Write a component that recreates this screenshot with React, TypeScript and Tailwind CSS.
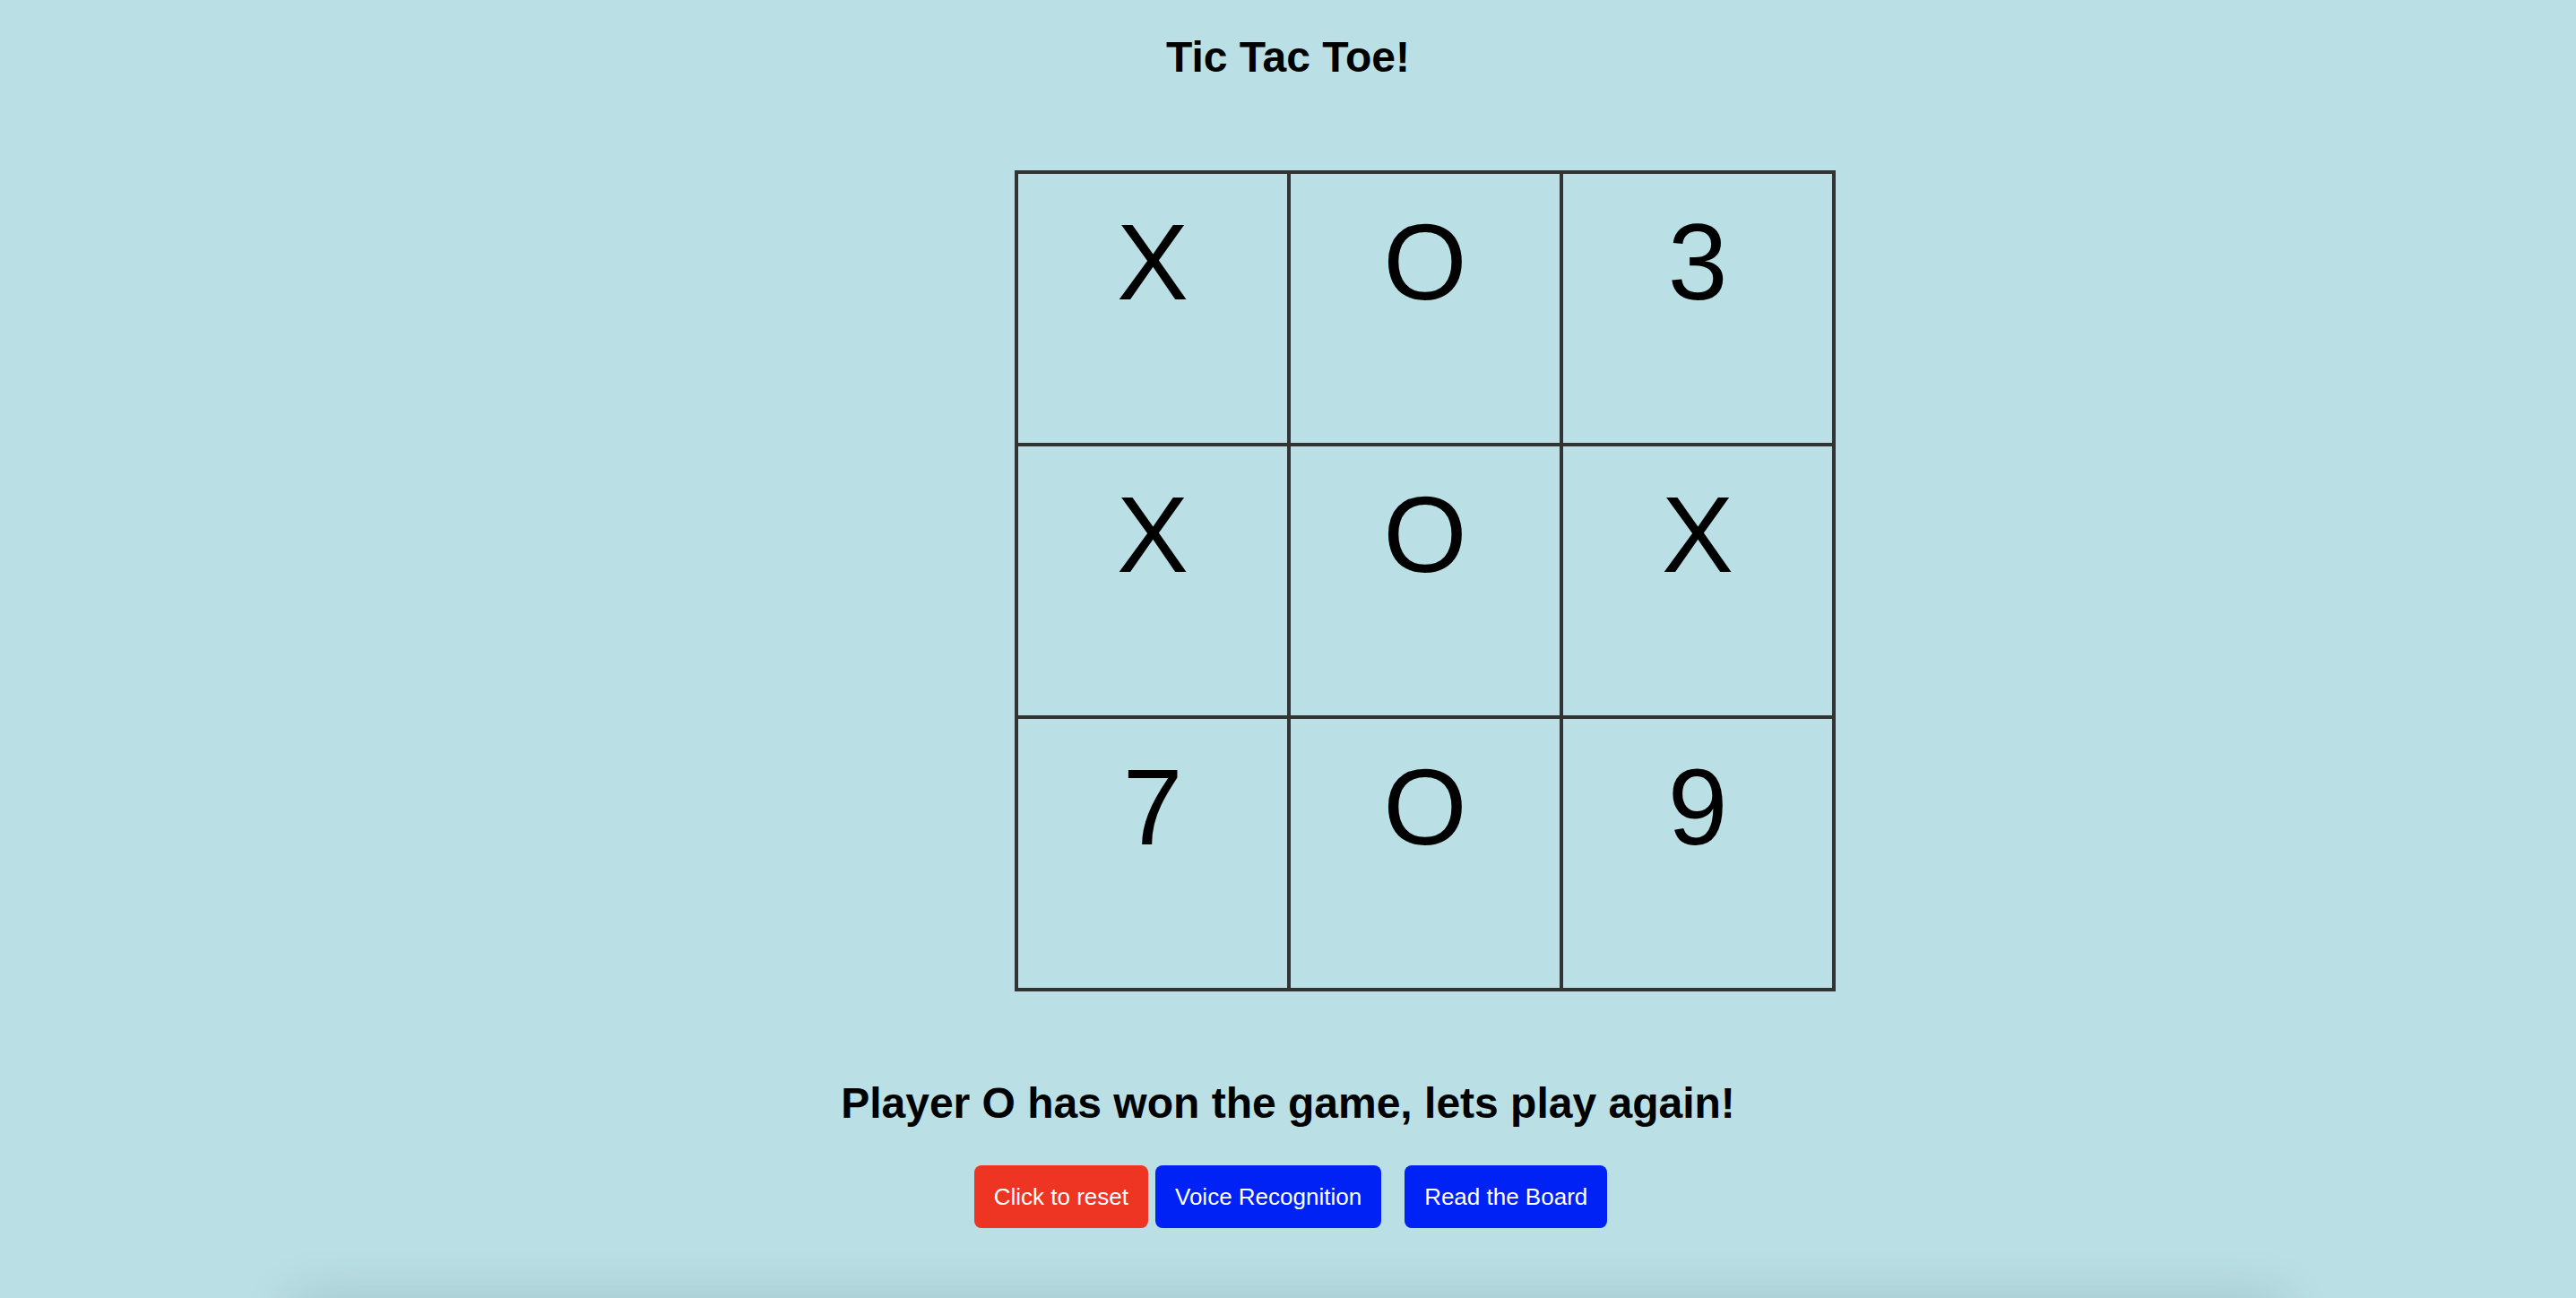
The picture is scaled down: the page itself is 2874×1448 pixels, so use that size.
import React from "react";

const cells = ["X", "O", "3", "X", "O", "X", "7", "O", "9"];

const Square: React.FC<{ value: string }> = ({ value }) => (
  <div className="w-[304px] h-[304px] border-2 border-[#333333] pt-[38px] text-center text-[120px] leading-none text-black">
    {value}
  </div>
);

export default function App() {
  return (
    <div className="h-[1448px] overflow-hidden bg-[#badfe4] font-['Liberation_Sans',Arial,sans-serif] text-black">
      <h1 className="mt-[40px] text-center text-[48px] font-bold leading-none">Tic Tac Toe!</h1>

      {/* board */}
      <div className="mt-[102px] flex justify-center">
        <div className="ml-[306px] grid grid-cols-3 border-2 border-[#333333]">
          {cells.map((c, i) => (
            <Square key={i} value={c} />
          ))}
        </div>
      </div>

      <h2 className="mt-[101px] text-center text-[48px] font-bold leading-none">
        Player O has won the game, lets play again!
      </h2>

      <div className="mt-[45px] flex justify-center">
        <button className="ml-[6px] h-[70px] rounded-lg bg-[#ee3524] px-[22px] text-[26px] text-white">
          Click to reset
        </button>
        <button className="ml-[8px] h-[70px] rounded-lg bg-[#0022f5] px-[22px] text-[26px] text-white">
          Voice Recognition
        </button>
        <button className="ml-[26px] h-[70px] rounded-lg bg-[#0022f5] px-[22px] text-[26px] text-white">
          Read the Board
        </button>
      </div>

      {/* card peeking from below the fold */}
      <div className="mx-auto mt-[80px] h-[120px] w-[2220px] shadow-[0_0_60px_rgba(0,40,50,0.15)]" />
    </div>
  );
}
